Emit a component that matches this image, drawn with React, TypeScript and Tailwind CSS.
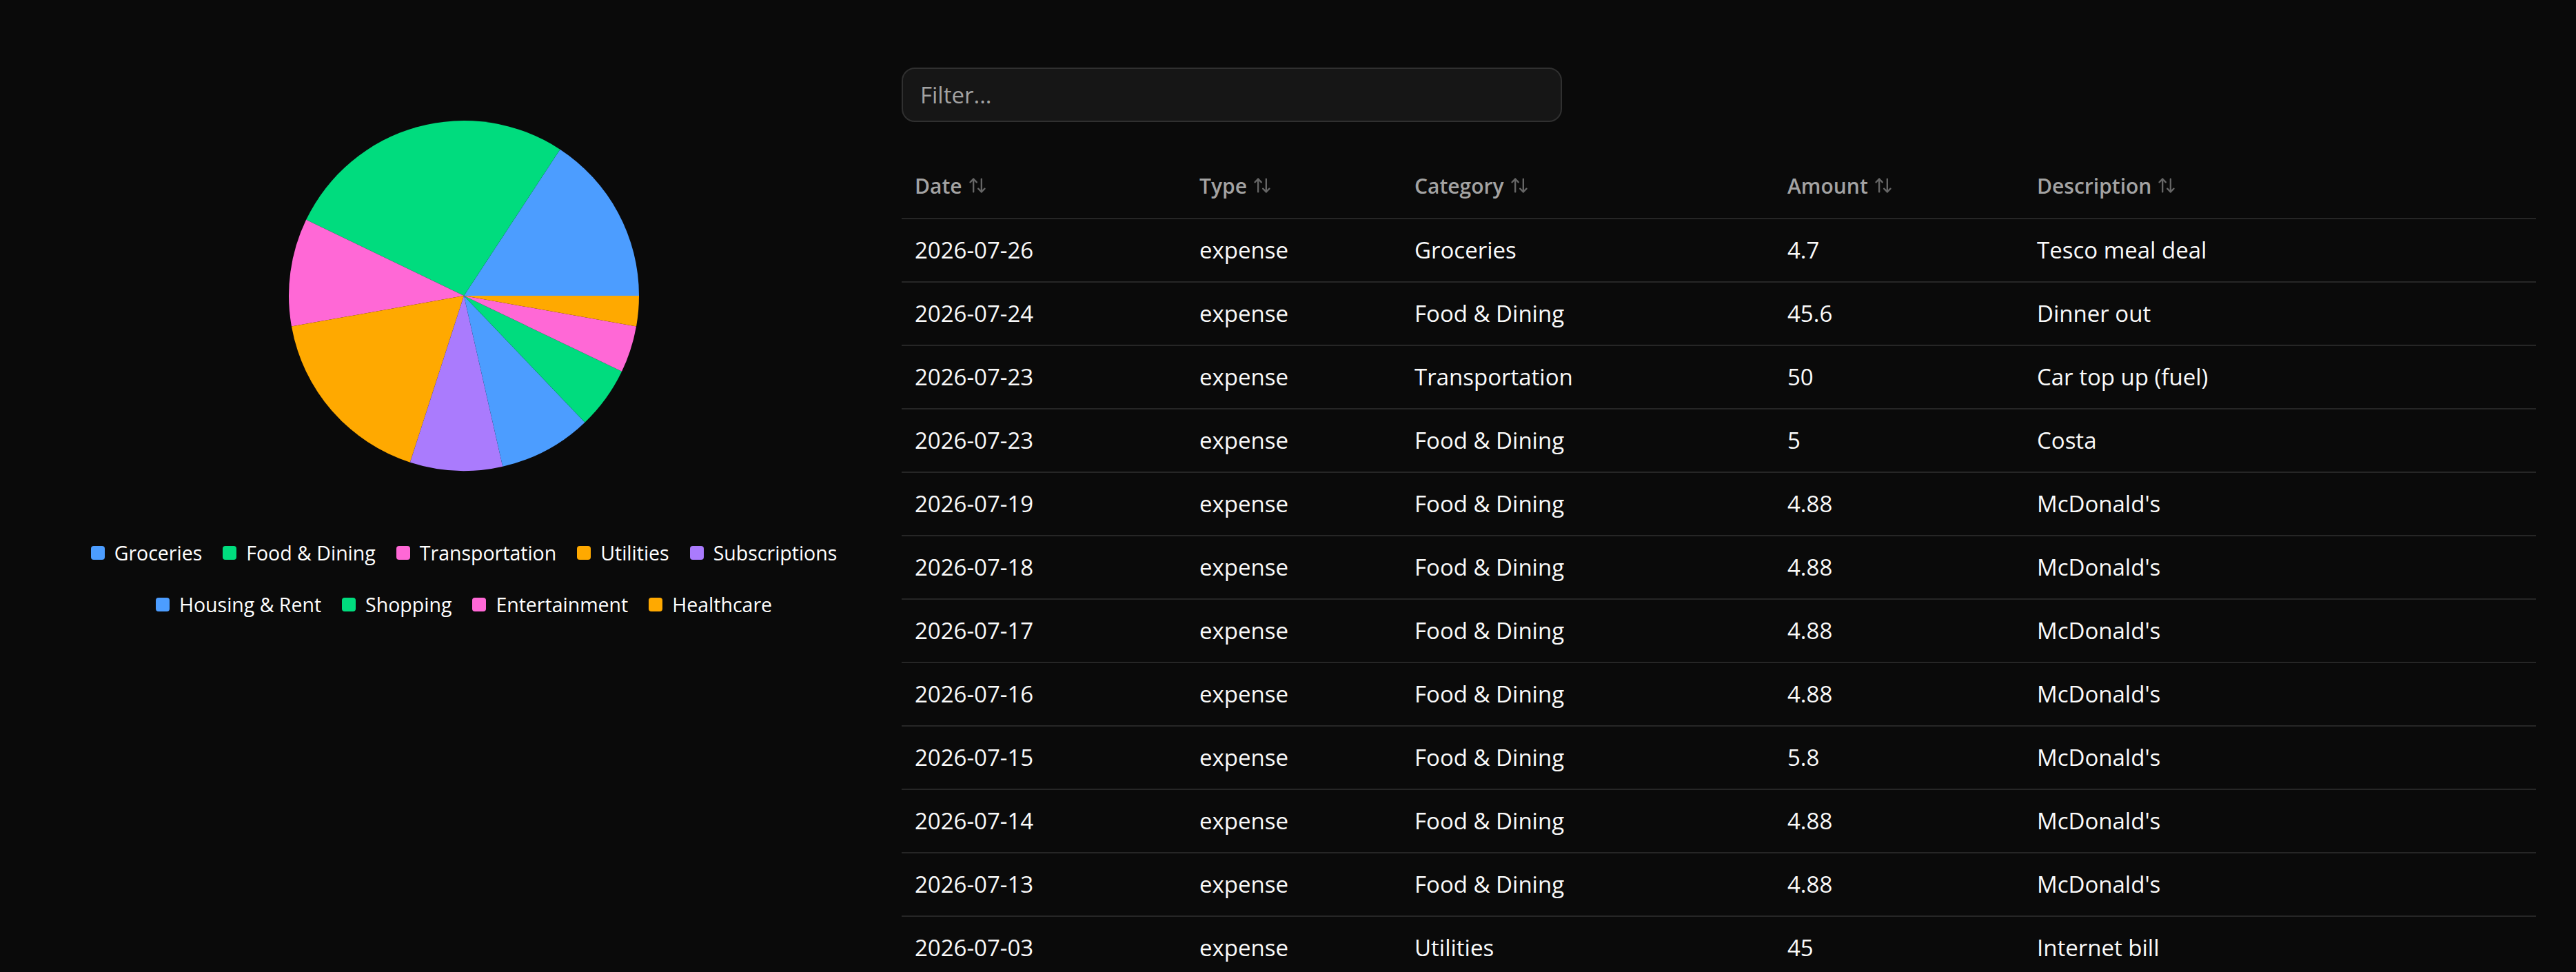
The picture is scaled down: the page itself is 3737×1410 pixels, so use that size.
import { ArrowUpDown } from 'lucide-react'

const slices = [
  { name: 'Groceries', deg: 56.7, color: '#4c9dff' },
  { name: 'Food & Dining', deg: 97.6, color: '#00dc7e' },
  { name: 'Transportation', deg: 35.8, color: '#ff68d6' },
  { name: 'Utilities', deg: 62, color: '#ffa900' },
  { name: 'Subscriptions', deg: 30.7, color: '#aa7bfd' },
  { name: 'Housing & Rent', deg: 30.9, color: '#4c9dff' },
  { name: 'Shopping', deg: 20.7, color: '#00dc7e' },
  { name: 'Entertainment', deg: 15.5, color: '#ff68d6' },
  { name: 'Healthcare', deg: 10.1, color: '#ffa900' },
]

const rows = [
  ['2026-07-26', 'expense', 'Groceries', '4.7', 'Tesco meal deal'],
  ['2026-07-24', 'expense', 'Food & Dining', '45.6', 'Dinner out'],
  ['2026-07-23', 'expense', 'Transportation', '50', 'Car top up (fuel)'],
  ['2026-07-23', 'expense', 'Food & Dining', '5', 'Costa'],
  ['2026-07-19', 'expense', 'Food & Dining', '4.88', "McDonald's"],
  ['2026-07-18', 'expense', 'Food & Dining', '4.88', "McDonald's"],
  ['2026-07-17', 'expense', 'Food & Dining', '4.88', "McDonald's"],
  ['2026-07-16', 'expense', 'Food & Dining', '4.88', "McDonald's"],
  ['2026-07-15', 'expense', 'Food & Dining', '5.8', "McDonald's"],
  ['2026-07-14', 'expense', 'Food & Dining', '4.88', "McDonald's"],
  ['2026-07-13', 'expense', 'Food & Dining', '4.88', "McDonald's"],
  ['2026-07-03', 'expense', 'Utilities', '45', 'Internet bill'],
]

const columns = [
  { label: 'Date', width: 'w-[413px]' },
  { label: 'Type', width: 'w-[312px]' },
  { label: 'Category', width: 'w-[541px]' },
  { label: 'Amount', width: 'w-[362px]' },
  { label: 'Description', width: 'w-[743px]' },
]

function Pie() {
  const cx = 256, cy = 256, r = 254
  let start = 0
  const paths = slices.map(s => {
    const a0 = (start * Math.PI) / 180
    const a1 = ((start + s.deg) * Math.PI) / 180
    start += s.deg
    const x0 = cx + r * Math.cos(a0), y0 = cy - r * Math.sin(a0)
    const x1 = cx + r * Math.cos(a1), y1 = cy - r * Math.sin(a1)
    const large = s.deg > 180 ? 1 : 0
    return <path key={s.name} d={`M${cx} ${cy} L${x0} ${y0} A${r} ${r} 0 ${large} 0 ${x1} ${y1} Z`} fill={s.color} />
  })
  return <svg width={512} height={512} viewBox="0 0 512 512">{paths}</svg>
}

export default function App() {
  return <div className="min-h-screen bg-[#0a0a0a] text-[#fafafa] font-['Open_Sans',sans-serif] flex">
    <div className="w-[1250px] ml-[48px] pt-[173px] flex flex-col items-center shrink-0">
      <Pie />
      <div className="mt-[97px] flex flex-wrap justify-center gap-x-[30px] gap-y-[35px] w-full">
        {slices.map(s => <div key={s.name} className="flex items-center gap-[14px] h-[40px]">
          <span className="w-[20px] h-[20px] rounded-[4px]" style={{ backgroundColor: s.color }} />
          <span className="text-[28.5px] leading-none text-white">{s.name}</span>
        </div>)}
      </div>
    </div>
    <div className="ml-[10px] w-[2371px] pt-[98px] shrink-0">
      <input placeholder="Filter..." className="w-[958px] h-[79px] rounded-[19px] border-2 border-[#303030] bg-[#161616] pl-[25px] text-[33px] text-[#fafafa] placeholder:text-[#a3a3a3] outline-none" />
      <table className="mt-[45px] w-full table-fixed">
        <colgroup>{columns.map(c => <col key={c.label} className={c.width} />)}</colgroup>
        <thead>
          <tr className="border-b-2 border-[#262626]">
            {columns.map(c => <th key={c.label} className="h-[95px] pl-[19px] text-left align-middle font-semibold text-[30px] text-[#a3a3a3]">
              <span className="inline-flex items-center gap-[8px]">{c.label}<ArrowUpDown size={28} strokeWidth={2} className="text-[#666666]" /></span>
            </th>)}
          </tr>
        </thead>
        <tbody>
          {rows.map((row, i) => <tr key={i} className="border-b-2 border-[#262626]">
            {row.map((cell, j) => <td key={j} className="h-[92px] pl-[19px] align-middle text-[33px] whitespace-nowrap">{cell}</td>)}
          </tr>)}
        </tbody>
      </table>
    </div>
  </div>
}
